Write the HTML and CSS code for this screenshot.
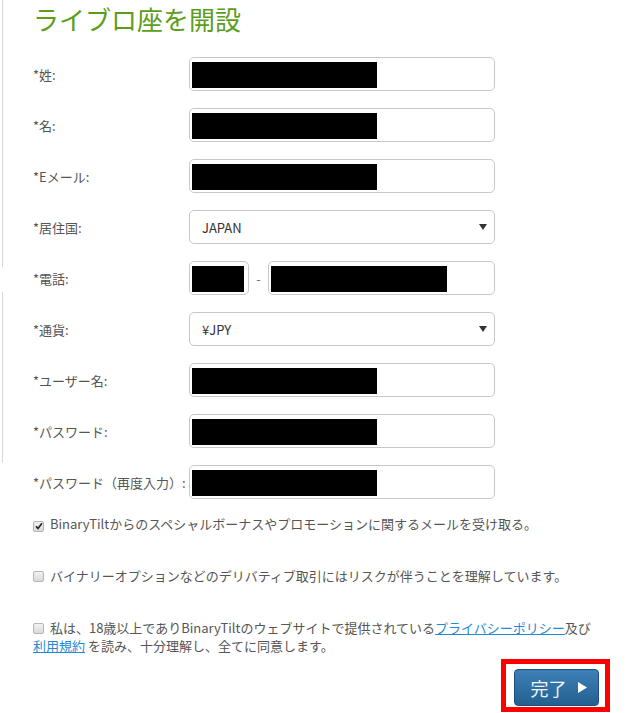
FILE: index.html
```html
<!DOCTYPE html>
<html lang="ja">
<head>
  <meta charset="UTF-8" />
  <meta name="viewport" content="width=device-width, initial-scale=1.0"/>
  <title>ライブ口座を開設</title>
  <link rel="stylesheet" href="styles.css">
</head>
<body>
  <section class="signup">
    <h1>ライブロ座を開設</h1>
    <form class="signup-form">
      <div class="row">
        <label>*姓:</label>
        <div class="field"><span class="redact"></span></div>
      </div>
      <div class="row">
        <label>*名:</label>
        <div class="field"><span class="redact"></span></div>
      </div>
      <div class="row">
        <label>*Eメール:</label>
        <div class="field"><span class="redact"></span></div>
      </div>
      <div class="row">
        <label>*居住国:</label>
        <div class="select-wrap">
          <select class="field select">
            <option>JAPAN</option>
          </select>
          <svg class="arrow" width="8" height="6" viewBox="0 0 8 6"><path d="M0 0h8L4 6z" fill="#333"/></svg>
        </div>
      </div>
      <div class="row">
        <label>*電話:</label>
        <div class="phone">
          <div class="field field-short"><span class="redact redact-short"></span></div>
          <span class="dash">-</span>
          <div class="field field-long"><span class="redact redact-long"></span></div>
        </div>
      </div>
      <div class="row">
        <label>*通貨:</label>
        <div class="select-wrap">
          <select class="field select">
            <option>¥JPY</option>
          </select>
          <svg class="arrow" width="8" height="6" viewBox="0 0 8 6"><path d="M0 0h8L4 6z" fill="#333"/></svg>
        </div>
      </div>
      <div class="row">
        <label>*ユーザー名:</label>
        <div class="field"><span class="redact"></span></div>
      </div>
      <div class="row">
        <label>*パスワード:</label>
        <div class="field"><span class="redact"></span></div>
      </div>
      <div class="row">
        <label>*パスワード（再度入力）:</label>
        <div class="field"><span class="redact"></span></div>
      </div>

      <div class="checks">
        <p class="check-line">
          <span class="box"><svg width="8" height="8" viewBox="0 0 8 8"><path d="M1 4.2l2 2.2L7 1.2" fill="none" stroke="#222" stroke-width="1.6"/></svg></span>
          BinaryTiltからのスペシャルボーナスやプロモーションに関するメールを受け取る。
        </p>
        <p class="check-line">
          <span class="box"></span>
          バイナリーオプションなどのデリバティブ取引にはリスクが伴うことを理解しています。
        </p>
        <p class="check-line">
          <span class="box"></span>
          私は、18歳以上でありBinaryTiltのウェブサイトで提供されている<a href="#">プライバシーポリシー</a>及び<br><a href="#">利用規約</a> を読み、十分理解し、全てに同意します。
        </p>
      </div>

      <div class="actions">
        <div class="highlight">
          <button type="submit">完了 <svg width="9" height="11" viewBox="0 0 9 11"><path d="M0 0l9 5.5L0 11z" fill="#fff"/></svg></button>
        </div>
      </div>
    </form>
  </section>
</body>
</html>
```

FILE: styles.css
```css
body {
  margin: 0;
  background: #fff;
  color: #555;
  font-family: "Noto Sans CJK JP", "Noto Sans", sans-serif;
  font-size: 13px;
}

.signup {
  width: 577px;
  padding: 0 0 0 33px;
  min-height: 713px;
  background:
    linear-gradient(#d8d8d8, #d8d8d8) 2px 0 / 1px 267px no-repeat,
    linear-gradient(#d8d8d8, #d8d8d8) 2px 292px / 1px 171px no-repeat;
}

h1 {
  margin: 0;
  padding-top: 2px;
  font-size: 26px;
  font-weight: normal;
  line-height: 34px;
  color: #5c9e1c;
}

.signup-form {
  display: flex;
  flex-direction: column;
  padding-top: 21px;
}

.row {
  display: flex;
  align-items: center;
  height: 34px;
  margin-bottom: 17px;
}

.row label {
  width: 156px;
  flex-shrink: 0;
  white-space: nowrap;
}

.field {
  box-sizing: border-box;
  width: 306px;
  height: 34px;
  padding: 4px 2px;
  border: 1px solid #c8c8c8;
  border-radius: 5px;
  background: #fff;
}

.redact {
  display: block;
  width: 185px;
  height: 26px;
  background: #000;
}

.select-wrap {
  position: relative;
}

.select {
  appearance: none;
  padding: 0 12px;
  font-family: inherit;
  font-size: 13px;
  color: #333;
}

.arrow {
  position: absolute;
  right: 8px;
  top: 14px;
  pointer-events: none;
}

.phone {
  display: flex;
  align-items: center;
}

.field-short {
  width: 60px;
}

.redact-short {
  width: 52px;
}

.dash {
  width: 19px;
  text-align: center;
  color: #777;
}

.field-long {
  width: 227px;
}

.redact-long {
  width: 176px;
}

.checks {
  margin-top: -1px;
}

.check-line {
  margin: 0 0 34px;
  line-height: 18px;
  color: #555;
}

.box {
  display: inline-block;
  box-sizing: border-box;
  width: 11px;
  height: 11px;
  margin-right: 3px;
  vertical-align: -1px;
  border: 1px solid #b5b5b5;
  border-radius: 2px;
  background: linear-gradient(#f2f2f2, #d9d9d9);
  line-height: 0;
}

.box svg {
  margin: 0.5px 0 0 0.5px;
}

.check-line a {
  color: #1f8ad6;
  white-space: nowrap;
}

.actions {
  display: flex;
  justify-content: flex-end;
  margin-top: -30px;
}

.highlight {
  padding: 5px 6px 1px 8px;
  border: 5px solid #f00;
}

button {
  display: flex;
  align-items: center;
  justify-content: center;
  gap: 11px;
  width: 85px;
  height: 37px;
  padding: 0 0 0 4px;
  border: 1px solid #1c4f7c;
  border-radius: 4px;
  background: linear-gradient(#3d80b8, #23608f);
  color: #eef3f8;
  font-family: inherit;
  font-size: 18px;
  cursor: pointer;
}
```
